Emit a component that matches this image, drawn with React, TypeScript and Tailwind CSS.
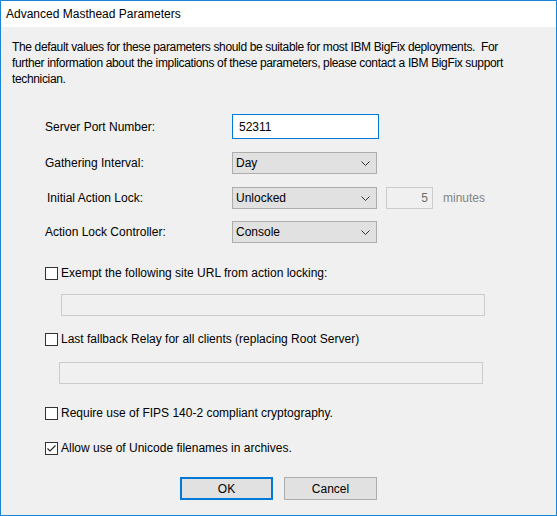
import { useState } from "react";

function Chevron() {
  return (
    <svg width="9" height="5" viewBox="0 0 9 5" className="shrink-0">
      <path d="M0.5 0.5 L4.5 4.5 L8.5 0.5" fill="none" stroke="#333" strokeWidth="1" />
    </svg>
  );
}

function Select({ value }: { value: string }) {
  return (
    <div className="flex items-center justify-between w-[145px] h-[22px] bg-[#e1e1e1] border border-[#adadad] pl-[3px] pr-[6px]">
      <span>{value}</span>
      <Chevron />
    </div>
  );
}

function Checkbox({ checked, label, onToggle }: { checked: boolean; label: string; onToggle: () => void }) {
  return (
    <div className="flex items-center h-[16px] ml-[44px] cursor-default" onClick={onToggle}>
      <div className="w-[13px] h-[13px] border border-[#333333] bg-white flex items-center justify-center">
        {checked && (
          <svg width="11" height="11" viewBox="0 0 11 11">
            <path d="M1.5 5.5 L4 8 L9.5 2.5" fill="none" stroke="#222" strokeWidth="1.1" />
          </svg>
        )}
      </div>
      <span className="ml-[3px]">{label}</span>
    </div>
  );
}

export default function App() {
  const [exempt, setExempt] = useState(false);
  const [fallback, setFallback] = useState(false);
  const [fips, setFips] = useState(false);
  const [unicode, setUnicode] = useState(true);

  return (
    <div
      className="w-[557px] h-[516px] border border-[#1883d7] bg-[#f0f0f0] flex flex-col text-[12px] text-black overflow-hidden"
      style={{ fontFamily: '"Liberation Sans", Arial, sans-serif' }}
    >
      <div className="h-[26px] bg-white flex items-center pl-[5px] shrink-0">Advanced Masthead Parameters</div>

      <div className="flex flex-col px-[11px] pt-[12px]">
        <p className="leading-[16px] whitespace-nowrap tracking-[-0.35px]">
          The default values for these parameters should be suitable for most IBM BigFix deployments.&nbsp; For
          <br />
          further information about the implications of these parameters, please contact a IBM BigFix support
          <br />
          technician.
        </p>

        <div className="flex items-center h-[25px] mt-[27px]">
          <span className="w-[187px] ml-[33px]">Server Port Number:</span>
          <div className="w-[147px] h-[25px] bg-white border border-[#0078d7] flex items-center pl-[6px]">52311</div>
        </div>

        <div className="flex items-center h-[22px] mt-[13px]">
          <span className="w-[187px] ml-[33px]">Gathering Interval:</span>
          <Select value="Day" />
        </div>

        <div className="flex items-center h-[22px] mt-[13px]">
          <span className="w-[185px] ml-[35px]">Initial Action Lock:</span>
          <Select value="Unlocked" />
          <div className="w-[47px] h-[22px] ml-[9px] border border-[#cccccc] flex items-center justify-end pr-[4px] text-[#6d6d6d]">
            5
          </div>
          <span className="ml-[10px] text-[#838383]">minutes</span>
        </div>

        <div className="flex items-center h-[22px] mt-[12px]">
          <span className="w-[187px] ml-[33px]">Action Lock Controller:</span>
          <Select value="Console" />
        </div>
      </div>

      <div className="flex flex-col">
        <div className="mt-[22px]">
          <Checkbox checked={exempt} label="Exempt the following site URL from action locking:" onToggle={() => setExempt(!exempt)} />
        </div>
        <div className="w-[424px] h-[22px] ml-[60px] mt-[13px] border border-[#cccccc]" />

        <div className="mt-[15px]">
          <Checkbox
            checked={fallback}
            label="Last fallback Relay for all clients (replacing Root Server)"
            onToggle={() => setFallback(!fallback)}
          />
        </div>
        <div className="w-[424px] h-[22px] ml-[58px] mt-[15px] border border-[#cccccc]" />

        <div className="mt-[21px]">
          <Checkbox checked={fips} label="Require use of FIPS 140-2 compliant cryptography." onToggle={() => setFips(!fips)} />
        </div>
        <div className="mt-[19px]">
          <Checkbox checked={unicode} label="Allow use of Unicode filenames in archives." onToggle={() => setUnicode(!unicode)} />
        </div>

        <div className="flex justify-center gap-[11px] mt-[21px]">
          <button className="w-[93px] h-[23px] bg-[#e1e1e1] border-2 border-[#0078d7]">OK</button>
          <button className="w-[93px] h-[23px] bg-[#e1e1e1] border border-[#adadad]">Cancel</button>
        </div>
      </div>
    </div>
  );
}
